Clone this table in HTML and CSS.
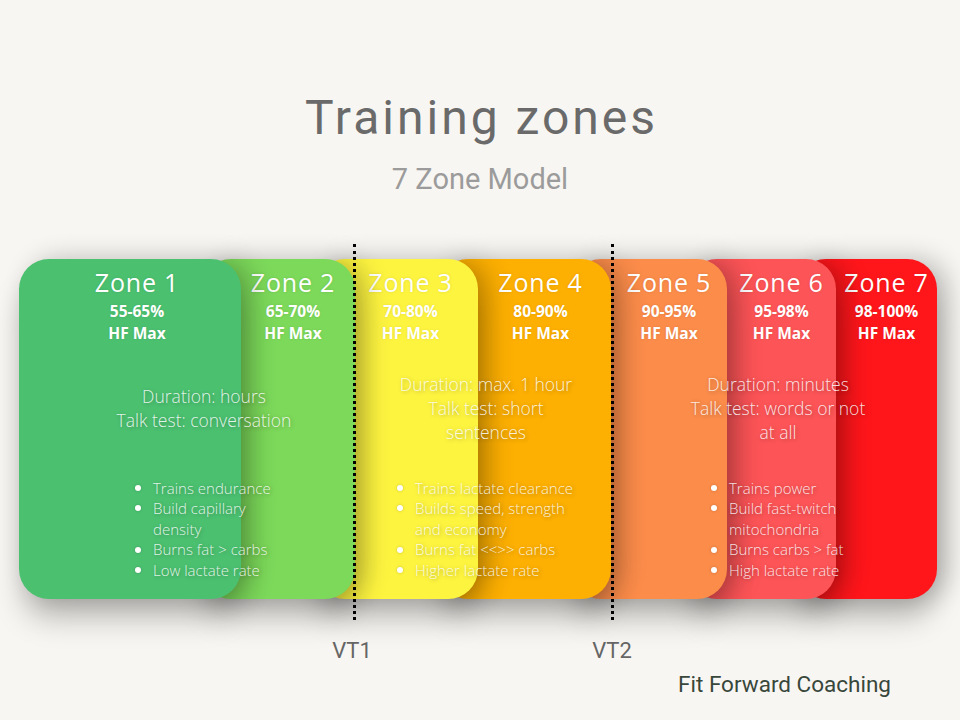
FILE: index.html
```html
<!DOCTYPE html>
<html lang="en">
<head>
<meta charset="utf-8">
<title>Training zones</title>
<link rel="stylesheet" href="styles.css">
</head>
<body>
<main class="page">
  <header class="head">
    <h1 class="title">Training zones</h1>
    <p class="subtitle">7 Zone Model</p>
  </header>

  <section class="chart">
    <div class="cards">
      <div class="card z1"><div class="card-in"><h2 class="zone">Zone 1</h2><p class="pct">55-65%<br>HF Max</p></div></div>
      <div class="card z2"><div class="card-in"><h2 class="zone">Zone 2</h2><p class="pct">65-70%<br>HF Max</p></div></div>
      <div class="card z3"><div class="card-in"><h2 class="zone">Zone 3</h2><p class="pct">70-80%<br>HF Max</p></div></div>
      <div class="card z4"><div class="card-in"><h2 class="zone">Zone 4</h2><p class="pct">80-90%<br>HF Max</p></div></div>
      <div class="card z5"><div class="card-in"><h2 class="zone">Zone 5</h2><p class="pct">90-95%<br>HF Max</p></div></div>
      <div class="card z6"><div class="card-in"><h2 class="zone">Zone 6</h2><p class="pct">95-98%<br>HF Max</p></div></div>
      <div class="card z7"><div class="card-in"><h2 class="zone">Zone 7</h2><p class="pct">98-100%<br>HF Max</p></div></div>
    </div>

    <div class="overlay">
      <div class="group g1">
        <div class="dur-box"><p class="dur">Duration: hours<br>Talk test: conversation</p></div>
        <div class="list-box">
          <ul class="list">
            <li>Trains endurance</li>
            <li>Build capillary density</li>
            <li>Burns fat &gt; carbs</li>
            <li>Low lactate rate</li>
          </ul>
        </div>
      </div>
      <div class="group g2">
        <div class="dur-box"><p class="dur">Duration: max. 1 hour<br>Talk test: short sentences</p></div>
        <div class="list-box">
          <ul class="list">
            <li>Trains lactate clearance</li>
            <li>Builds speed, strength and economy</li>
            <li>Burns fat &lt;&lt;&gt;&gt; carbs</li>
            <li>Higher lactate rate</li>
          </ul>
        </div>
      </div>
      <div class="group g3">
        <div class="dur-box"><p class="dur">Duration: minutes<br>Talk test: words or not at all</p></div>
        <div class="list-box">
          <ul class="list">
            <li>Trains power</li>
            <li>Build fast-twitch mitochondria</li>
            <li>Burns carbs &gt; fat</li>
            <li>High lactate rate</li>
          </ul>
        </div>
      </div>
    </div>

    <span class="vt vt1" aria-hidden="true"></span>
    <span class="vt vt2" aria-hidden="true"></span>
  </section>

  <div class="vt-labels">
    <span class="vt-label">VT1</span>
    <span class="vt-label">VT2</span>
  </div>
  <p class="brand">Fit Forward Coaching</p>
</main>
</body>
</html>
```

FILE: styles.css
```css
* { box-sizing: border-box; }

html, body {
  margin: 0;
  padding: 0;
  background: #f8f6f2;
}

.page {
  width: 960px;
  height: 720px;
  overflow: hidden;
  padding-top: 90px;
  font-family: Roboto, "Liberation Sans", sans-serif;
}

/* Header */
.head { text-align: center; }

.title {
  margin: 0;
  font-family: Roboto, sans-serif;
  font-weight: 400;
  font-size: 48px;
  line-height: 56px;
  letter-spacing: 3px;
  padding-left: 3px;
  color: #6a6a6a;
}

.subtitle {
  margin: 16px 0 0;
  font-family: Roboto, sans-serif;
  font-size: 29px;
  line-height: 34px;
  color: #9b9b9b;
}

/* Chart */
.chart {
  position: relative;
  display: grid;
  margin: 63px 0 0 19px;
  width: 918px;
  height: 340px;
}

.cards,
.overlay {
  grid-area: 1 / 1;
}

.cards {
  position: relative;
  z-index: 0;
  display: flex;
  height: 340px;
}

.card {
  flex: none;
  height: 340px;
  border-radius: 30px;
  color: #fff;
  font-family: "Open Sans", sans-serif;
  box-shadow: 10px 0 26px rgba(0, 0, 0, 0.24), 0 24px 30px -4px rgba(0, 0, 0, 0.22);
}

.card + .card {
  margin-left: -40px;
  padding-left: 40px;
}

.card-in {
  padding-top: 7px;
  text-align: center;
}

.z1 { width: 222px; background: #4bc170; z-index: 7; }
.z2 { width: 154px; background: #7cd95a; z-index: 6; }
.z3 { width: 163px; background: #fdf440; z-index: 5; }
.z4 { width: 173px; background: #fdb002; z-index: 4; }
.z5 { width: 156px; background: #fb8c4a; z-index: 3; }
.z6 { width: 149px; background: #fd5457; z-index: 2; }
.z7 { width: 141px; background: #ff161b; z-index: 1; }

.z1 .card-in { padding-left: 14px; }
.z2 .card-in { padding-right: 10px; }
.z3 .card-in { padding-right: 12px; }
.z4 .card-in { padding-right: 8px; }

.zone {
  margin: 0;
  font-weight: 400;
  font-size: 25px;
  line-height: 32px;
  letter-spacing: 0.8px;
  text-shadow: 0 0 3px rgba(0, 0, 0, 0.12);
}

.pct {
  margin: 2px 0 0;
  font-weight: 700;
  font-size: 15.5px;
  line-height: 22px;
  text-shadow: 0 0 3px rgba(0, 0, 0, 0.1);
}

/* Overlay text */
.overlay {
  position: relative;
  z-index: 1;
  display: flex;
  align-items: flex-start;
  padding-left: 35px;
  font-family: "Open Sans", sans-serif;
  font-weight: 300;
  color: rgba(255, 255, 255, 0.85);
  text-shadow: 1px 1px 4px rgba(0, 0, 0, 0.3);
}

.group {
  flex: none;
  display: flex;
  flex-direction: column;
  padding-top: 101px;
}

.g1 { width: 300px; }
.g2 { width: 200px; margin-left: 32px; }
.g3 { width: 200px; margin-left: 92px; }

.dur-box {
  height: 96px;
  display: flex;
  align-items: center;
  justify-content: center;
}

.dur {
  margin: 0;
  font-size: 17.5px;
  line-height: 24px;
  text-align: center;
}

.g2 .dur { width: 186px; }
.g3 .dur { width: 188px; }

.list-box {
  height: 120px;
  margin-top: 13px;
  display: flex;
  align-items: center;
}

.list {
  margin: 0;
  padding: 0;
  list-style: none;
  font-size: 15px;
  line-height: 20.6px;
}

.g1 .list { margin-left: 81px; width: 150px; }
.g2 .list { margin-left: 11px; width: 186px; }
.g3 .list { margin-left: 33px; width: 170px; }

.list li {
  display: flex;
  align-items: flex-start;
}

.list li::before {
  content: "";
  flex: none;
  width: 6px;
  height: 6px;
  margin: 7.3px 12px 0 0;
  border-radius: 50%;
  background: #fff;
  box-shadow: 0 0 3px rgba(0, 0, 0, 0.2);
}

/* Threshold lines */
.vt {
  position: absolute;
  top: -15px;
  width: 3px;
  height: 376px;
  border-left: 3px dotted #000;
  z-index: 2;
}

.vt1 { left: 334px; }
.vt2 { left: 592px; }

/* Labels */
.vt-labels {
  display: flex;
  margin-top: 39px;
  padding-left: 322px;
  font-size: 22px;
  line-height: 26px;
  color: #666;
}

.vt-label {
  width: 60px;
  text-align: center;
}

.vt-label + .vt-label { margin-left: 200px; }

.brand {
  margin: 7px 0 0;
  padding-right: 69px;
  text-align: right;
  font-size: 22.5px;
  line-height: 26px;
  color: #38473b;
}
```
